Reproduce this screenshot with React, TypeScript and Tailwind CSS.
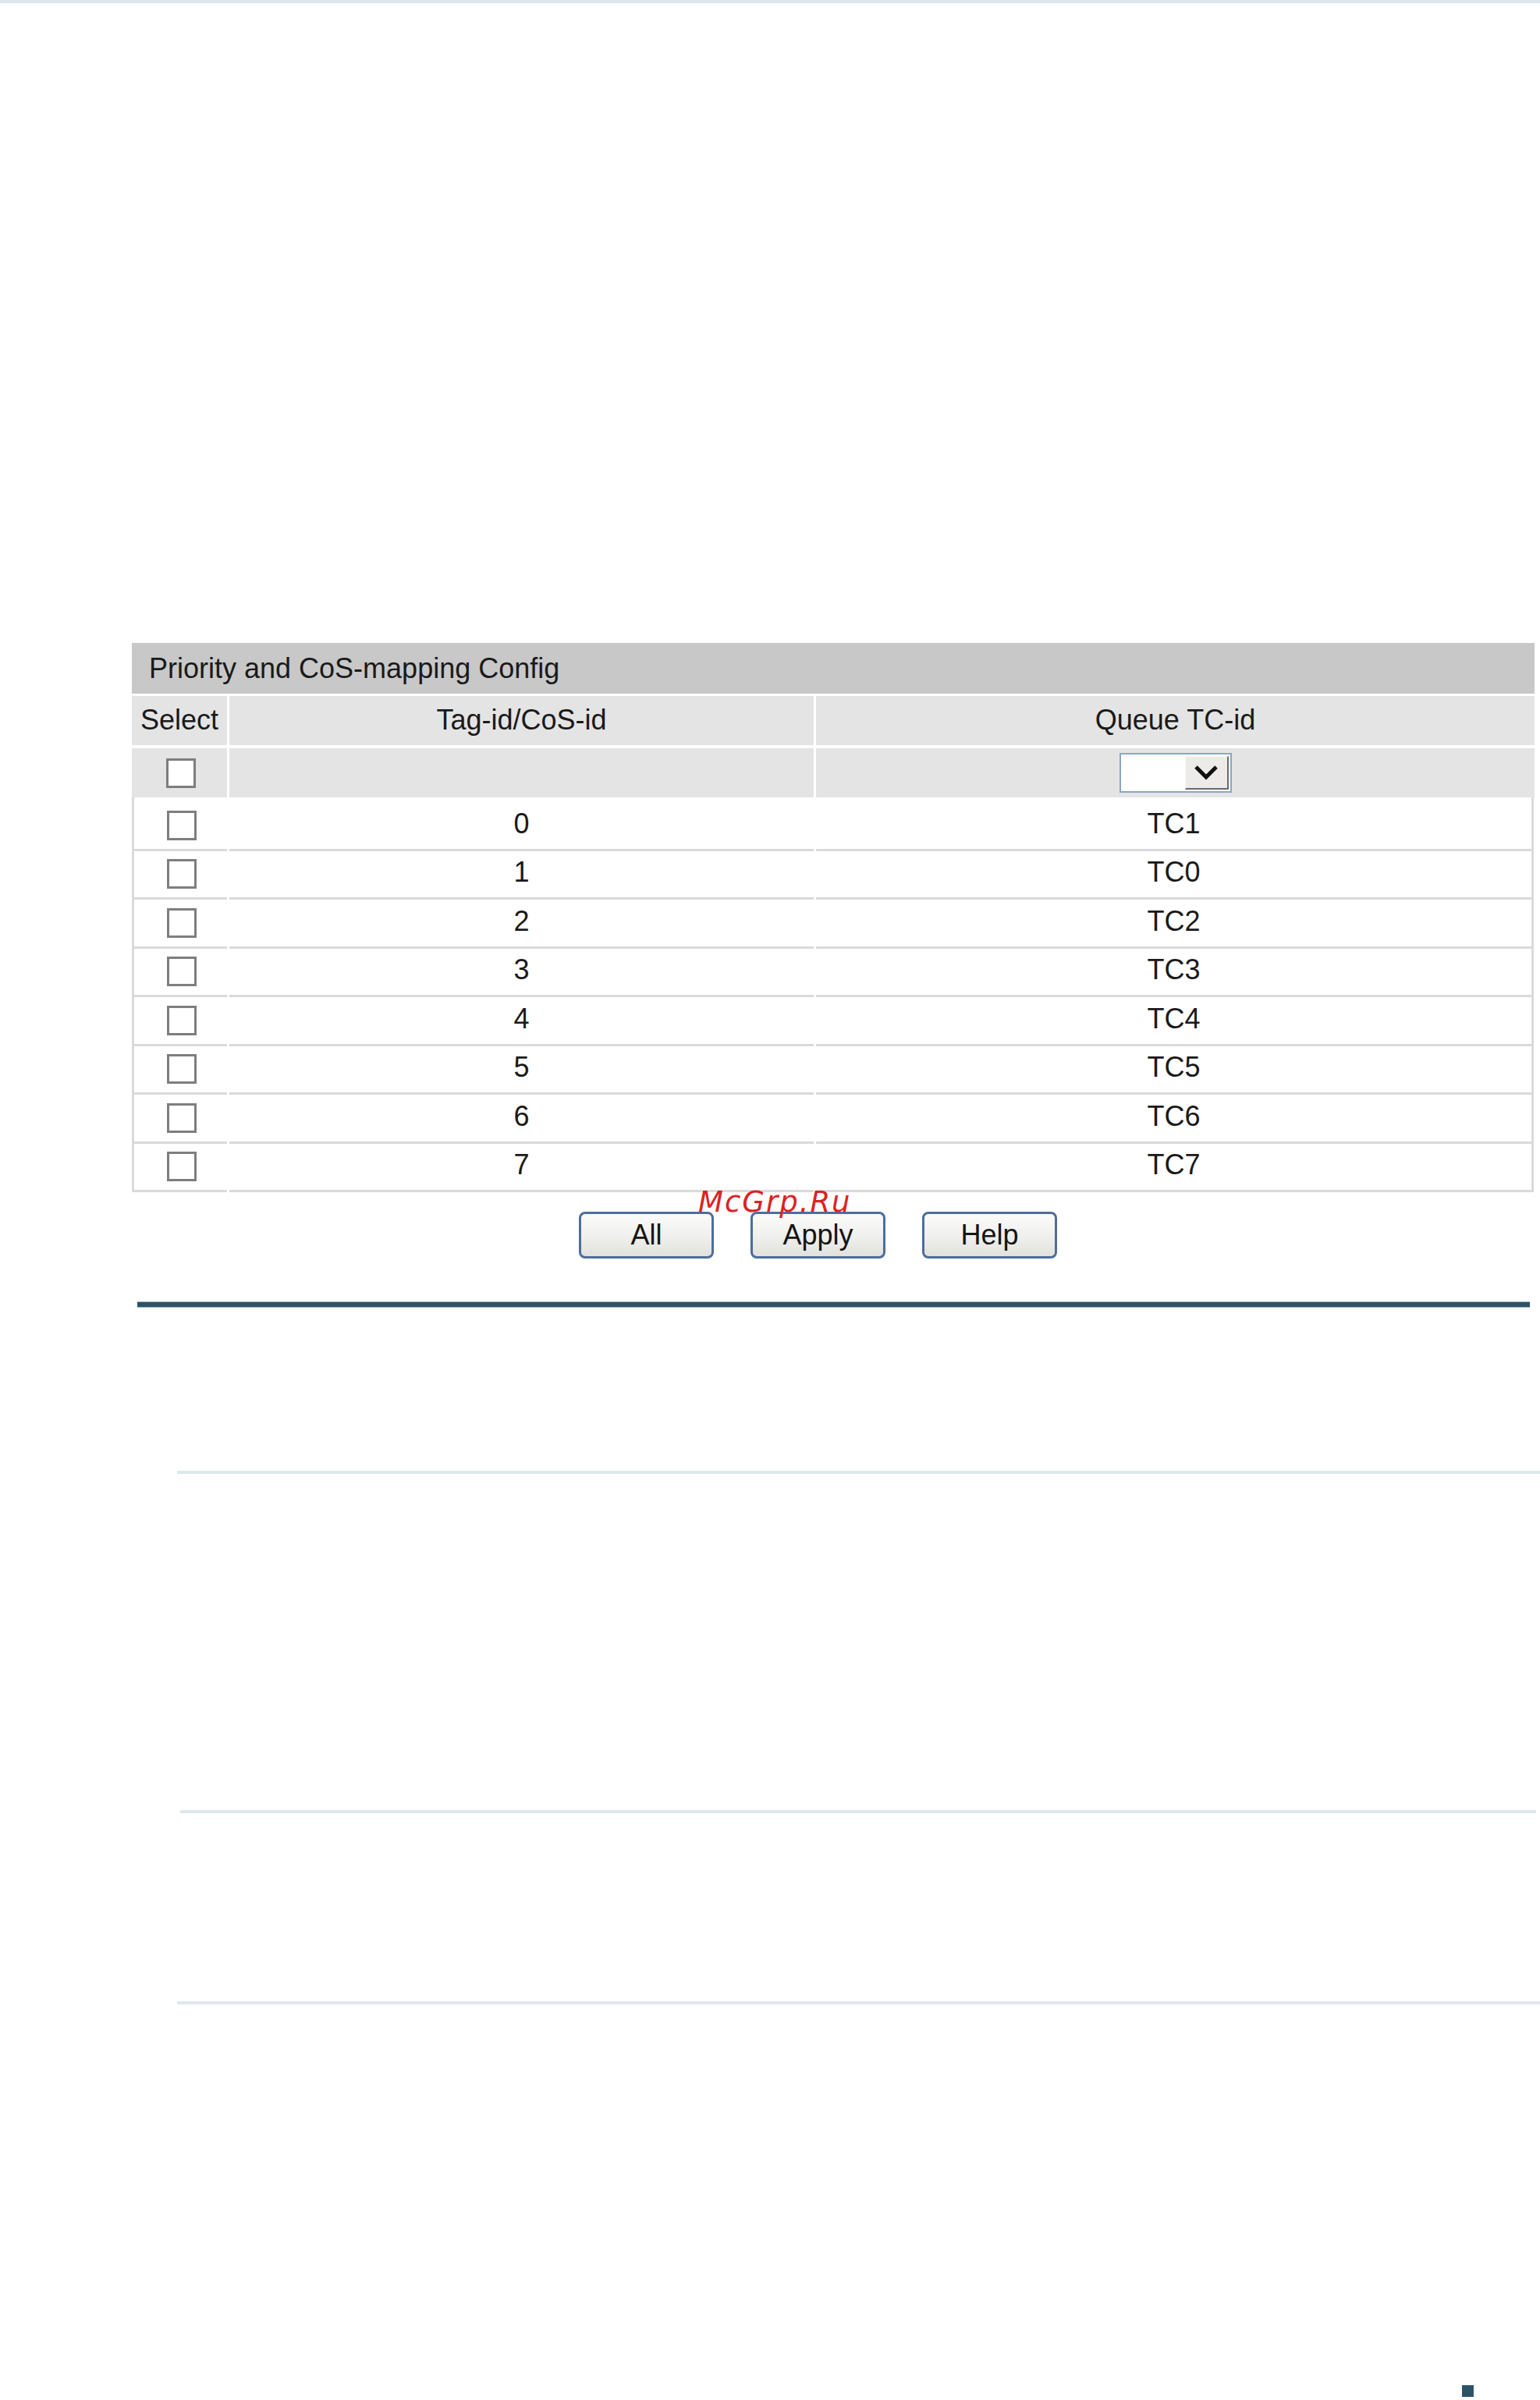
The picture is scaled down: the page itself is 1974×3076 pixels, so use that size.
import React from 'react';

const rows = [
  { id: '0', tc: 'TC1' },
  { id: '1', tc: 'TC0' },
  { id: '2', tc: 'TC2' },
  { id: '3', tc: 'TC3' },
  { id: '4', tc: 'TC4' },
  { id: '5', tc: 'TC5' },
  { id: '6', tc: 'TC6' },
  { id: '7', tc: 'TC7' },
];

const Checkbox: React.FC = () => (
  <div className="w-[38px] h-[38px] border-[3px] border-[#7e7e7e] bg-white" />
);

const Dropdown: React.FC = () => (
  <div className="w-[144px] h-[51px] border-2 border-[#8aa5c8] bg-white flex">
    <div className="flex-1 bg-white" />
    <div className="w-[56px] my-[2px] mr-[2px] bg-[#ecebe8] border-t border-l border-t-[#fafafa] border-l-[#fafafa] border-r-2 border-b-2 border-r-[#6b6b6b] border-b-[#6b6b6b] flex items-center justify-center">
      <svg width="32" height="22" viewBox="0 0 32 22">
        <polyline points="3,4 16,17 29,4" fill="none" stroke="#111" strokeWidth="5" />
      </svg>
    </div>
  </div>
);

const Button: React.FC<{ label: string }> = ({ label }) => (
  <button className="w-[173px] h-[60px] border-[3px] border-[#4f6d9a] rounded-[8px] bg-gradient-to-b from-[#fbfbfb] via-[#f0f0ee] to-[#e2e2dc] text-[36px] text-[#151515] flex items-center justify-center">
    {label}
  </button>
);

const App: React.FC = () => {
  return (
    <div
      className="relative w-[1974px] min-h-[3076px] bg-white text-[#1a1a1a] overflow-hidden"
      style={{ fontFamily: '"Liberation Sans", Arial, sans-serif' }}
    >
      <div className="h-[4px] bg-[#dde7ec]" />

      {/* config table */}
      <div className="mt-[820px] ml-[169px] w-[1798px] text-[36px] leading-none">
        <div className="h-[65px] bg-[#c8c8c8] flex items-center pl-[22px]">
          Priority and CoS-mapping Config
        </div>
        <div className="mt-[3px] grid grid-cols-[122px_749px_1fr] gap-x-[3px]">
          <div className="h-[63px] pb-[2px] bg-[#e4e4e4] flex items-center justify-center">Select</div>
          <div className="h-[63px] pb-[2px] bg-[#e4e4e4] flex items-center justify-center">Tag-id/CoS-id</div>
          <div className="h-[63px] pb-[2px] bg-[#e4e4e4] flex items-center justify-center">Queue TC-id</div>
        </div>
        <div className="mt-[4px] grid grid-cols-[122px_749px_1fr] gap-x-[3px]">
          <div className="h-[63px] bg-[#e4e4e4] flex items-center justify-center pl-[3px]">
            <Checkbox />
          </div>
          <div className="h-[63px] bg-[#e4e4e4]" />
          <div className="h-[63px] bg-[#e4e4e4] flex items-center justify-center">
            <Dropdown />
          </div>
        </div>
        <div className="w-[1797px] border-l-[3px] border-r-[3px] border-[#dadada] pt-[6px]">
          {rows.map((r) => (
            <div key={r.id} className="grid grid-cols-[119px_749px_1fr] gap-x-[3px]">
              <div className="h-[62.5px] border-b-[3px] border-[#dadada] flex items-center justify-center pl-[3px]">
                <Checkbox />
              </div>
              <div className="h-[62.5px] pb-[4px] border-b-[3px] border-[#dadada] flex items-center justify-center">
                {r.id}
              </div>
              <div className="h-[62.5px] pb-[4px] border-b-[3px] border-[#dadada] flex items-center justify-center">
                {r.tc}
              </div>
            </div>
          ))}
        </div>
      </div>

      <div className="mt-[25px] pl-[742px] flex gap-[47px]">
        <Button label="All" />
        <Button label="Apply" />
        <Button label="Help" />
      </div>

      {/* watermark */}
      <div
        className="absolute left-[895px] top-[1522px] text-[37px] leading-none italic text-[#dd2222] tracking-[2px]"
        style={{ fontFamily: '"DejaVu Sans", Verdana, sans-serif' }}
      >
        McGrp.Ru
      </div>

      <div className="mt-[55px] ml-[176px] w-[1785px] h-[8px] bg-[#2d5266] border-y border-[#9fb1ba]" />

      <div className="mt-[209px] ml-[227px] h-[4px] bg-[#dde7ec]" />
      <div className="mt-[431px] ml-[231px] w-[1738px] h-[4px] bg-[#dde7ec]" />
      <div className="mt-[241px] ml-[227px] h-[4px] bg-[#dde7ec]" />

      <div className="mt-[488px] ml-[1874px] w-[15px] h-[15px] bg-[#2c5468]" />
    </div>
  );
};

export default App;
